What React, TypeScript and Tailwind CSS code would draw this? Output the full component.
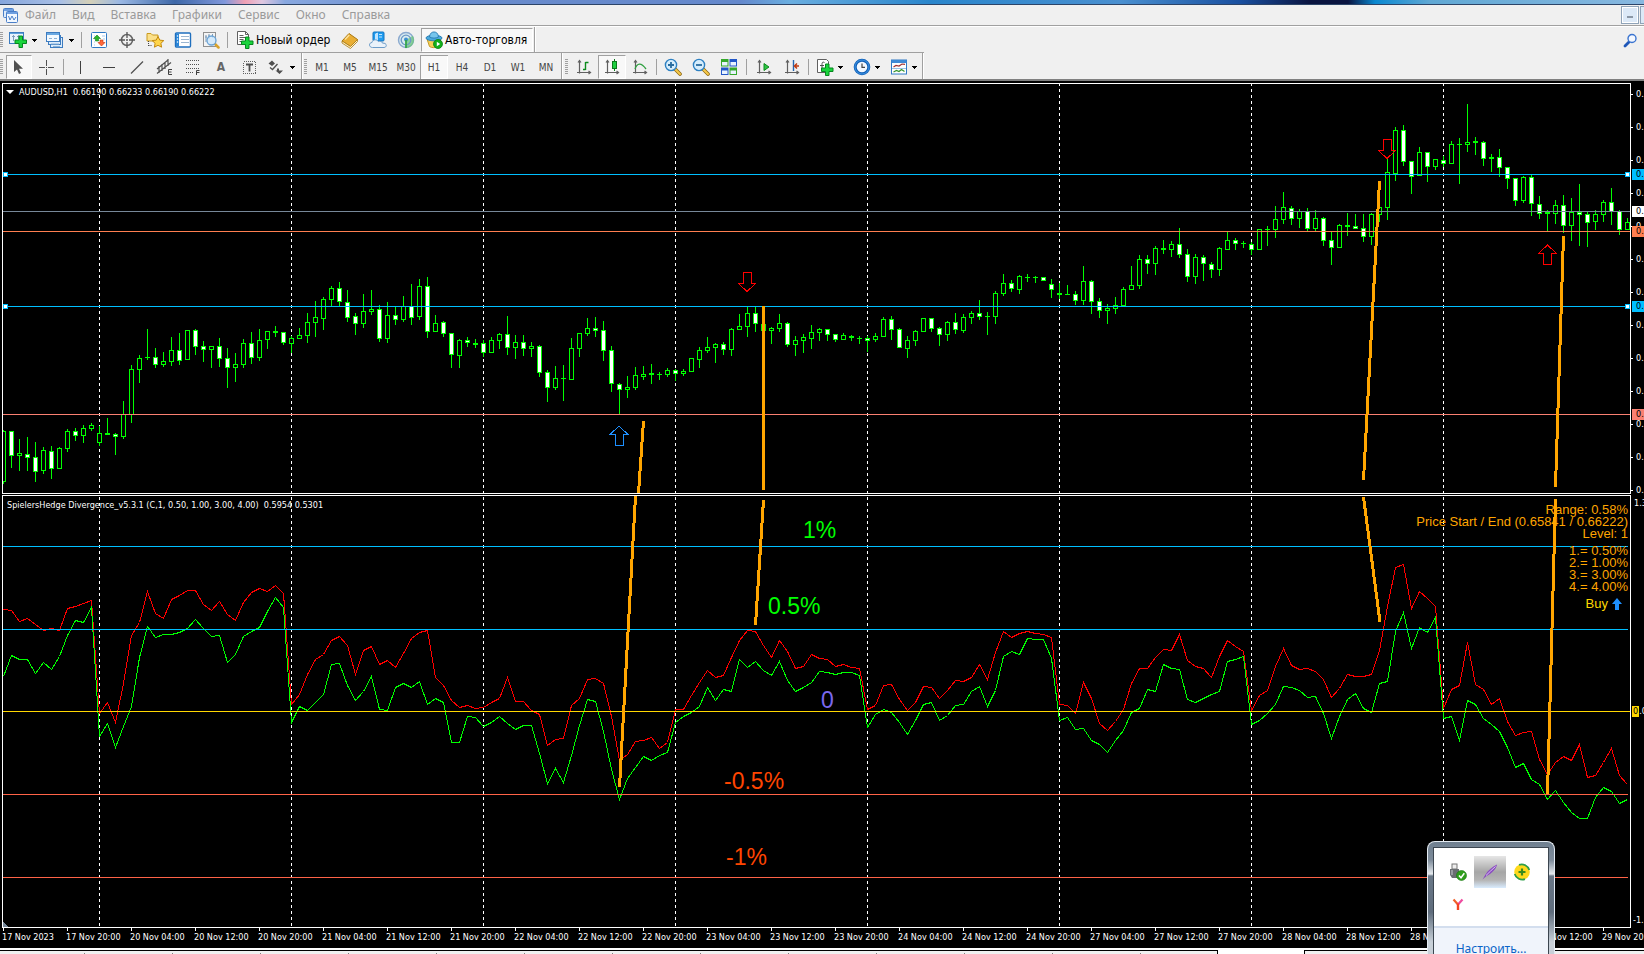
import type { ReactNode } from "react";

/* high, body top, body bottom, low, direction (u = hollow, d = filled) */
const CANDLES = `
430 431 481 483 u|431 431 455 467 d|439 453 455 470 u|437 454 457 470 d|442 457 471 481 d|447 450 470 473 u|446 451 468 478 d|447 448 468 468 u|429 431 448 451 u|428 431 435 440 d|
425 428 435 442 u|423 425 428 430 u|426 433 442 445 u|418 433 434 434 d|433 434 436 454 d|401 414 436 438 u|365 369 414 422 u|355 358 369 382 u|329 357 357 359 d|348 357 364 367 d|
352 361 364 366 u|337 350 361 365 u|333 350 360 364 d|330 330 359 359 u|329 330 346 354 d|341 346 349 361 d|346 346 349 367 u|338 346 358 366 d|348 358 367 387 d|353 364 367 381 u|
339 343 364 367 u|332 343 357 363 d|329 340 357 360 u|331 331 339 348 u|326 331 332 336 d|332 332 342 344 d|336 338 343 352 u|328 335 338 338 u|313 322 335 342 u|301 317 322 336 u|
297 299 318 329 u|286 288 299 306 u|282 288 301 305 d|290 302 317 321 d|313 316 323 334 d|294 311 323 327 u|290 309 311 314 u|305 309 338 341 d|302 315 338 342 u|306 315 319 324 d|
296 306 319 321 u|284 306 317 324 d|279 286 316 319 u|277 286 331 337 d|315 323 331 331 u|321 322 333 336 d|333 333 354 367 d|339 340 355 367 u|337 340 342 346 d|339 343 344 347 d|
340 343 352 356 d|337 340 352 352 u|333 334 340 348 u|316 334 347 354 d|335 342 347 358 u|335 342 348 355 d|342 346 348 356 u|345 346 372 376 d|370 372 387 401 d|366 378 387 389 u|
365 378 378 400 d|338 348 379 379 u|333 333 348 356 u|318 328 333 335 u|317 328 330 336 d|321 330 350 360 d|346 350 383 391 d|383 384 389 413 d|376 387 389 397 u|367 375 387 389 u|
366 374 376 379 u|364 373 374 383 d|372 374 374 379 d|368 370 374 376 u|369 370 373 380 d|369 371 373 375 u|358 358 371 371 u|347 350 359 367 u|337 347 350 352 u|343 344 347 362 u|
342 344 349 354 d|328 329 349 355 u|314 326 329 329 u|307 313 326 336 u|307 313 323 331 d|307 324 330 330 u|327 328 330 343 u|314 323 328 331 u|322 323 344 346 d|336 340 344 355 u|
334 337 340 352 u|325 332 338 348 u|328 329 332 340 u|329 329 334 340 d|334 334 339 341 d|333 335 339 339 u|335 336 337 340 d|336 338 338 343 d|336 338 340 351 d|333 336 339 341 u|
317 319 336 336 u|316 319 329 339 d|328 329 347 347 d|336 340 348 357 u|330 331 340 345 u|318 318 331 331 u|318 318 328 331 d|327 328 334 345 d|321 322 334 340 u|313 322 329 333 d|
314 317 330 332 u|311 313 317 323 u|300 313 316 319 d|312 316 316 334 d|291 293 316 323 u|274 283 293 295 u|280 283 288 291 d|275 276 289 293 u|274 277 277 281 d|276 277 277 282 d|
277 277 280 280 d|279 284 289 297 d|283 293 294 298 d|285 294 294 294 d|291 294 300 304 d|266 281 300 304 u|280 281 301 313 d|298 301 310 317 d|304 308 310 323 u|297 305 308 313 u|
287 289 305 305 u|266 285 289 289 u|255 259 285 288 u|255 259 263 273 d|246 248 263 274 u|240 248 249 253 d|241 244 249 256 u|228 244 254 257 d|249 254 276 281 d|254 257 276 283 u|
255 257 263 280 d|262 264 269 277 d|247 248 269 275 u|232 240 249 249 u|238 240 243 249 d|241 243 243 247 d|242 244 249 254 d|229 229 249 249 u|226 229 229 245 d|206 219 229 237 u|
192 207 219 223 u|206 208 218 224 d|209 211 218 227 u|208 211 228 231 d|210 218 228 231 u|217 218 240 245 d|232 240 247 264 d|224 225 247 247 u|213 225 226 235 d|214 226 228 228 d|
214 228 236 241 d|213 214 236 244 u|207 207 214 221 u|158 172 207 219 u|127 130 173 180 u|125 130 161 165 d|161 161 176 193 d|147 152 175 175 u|152 152 166 181 d|159 159 166 169 u|
156 160 163 166 d|141 144 163 163 u|138 144 144 183 d|104 142 144 151 u|137 141 142 154 d|141 142 158 165 d|154 157 158 171 d|149 157 167 176 d|167 167 178 188 d|178 178 200 205 d|
176 177 200 202 u|175 177 203 215 d|196 204 213 218 d|210 212 213 230 d|200 205 213 223 u|195 205 225 232 d|198 212 225 240 u|184 212 214 245 d|211 214 222 246 d|210 214 221 229 u|
200 202 214 221 u|188 202 211 224 d|210 211 229 234 d|218 222 229 229 u`
  .trim()
  .split("|")
  .map((row) => {
    const [h, t, b, l, dir] = row.trim().split(" ");
    return { h: +h, t: +t, b: +b, l: +l, up: dir === "u" };
  });

/* samples in thirds of a pixel, measured from y = 490 */
const RED = [
  358, 362, 395, 386, 403, 420, 416, 421, 354, 349, 341, 332, 670, 638, 697, 580, 437, 398, 303, 371, 385, 328, 315, 302, 302, 343, 361, 335, 374, 390, 338, 308, 295, 304, 287,
  310, 642, 612, 553, 508, 492, 450, 438, 467, 553, 482, 470, 522, 511, 532, 490, 444, 428, 420, 562, 586, 632, 652, 647, 656, 651, 638, 626, 563, 634, 634, 661, 672, 766, 748,
  744, 645, 626, 569, 565, 580, 680, 812, 792, 755, 751, 742, 775, 758, 659, 658, 617, 577, 541, 562, 556, 503, 452, 421, 425, 467, 502, 452, 484, 535, 529, 493, 504, 509, 529,
  523, 532, 536, 657, 646, 586, 583, 628, 661, 637, 589, 592, 625, 600, 571, 574, 562, 523, 568, 487, 425, 443, 431, 424, 430, 433, 443, 643, 646, 669, 577, 626, 700, 721, 694,
  658, 580, 535, 535, 502, 478, 481, 434, 512, 530, 536, 562, 500, 450, 470, 484, 662, 616, 602, 530, 476, 526, 539, 535, 544, 568, 622, 595, 553, 559, 559, 553, 480, 350, 233,
  224, 355, 305, 325, 349, 655, 598, 585, 458, 584, 598, 643, 626, 695, 737, 728, 724, 808, 853, 817, 800, 810, 762, 861, 856, 817, 775, 856, 884,
];
const GREEN = [
  560, 496, 508, 508, 550, 518, 538, 500, 435, 392, 397, 352, 740, 700, 772, 709, 650, 503, 408, 442, 434, 433, 427, 415, 388, 415, 439, 437, 516, 494, 440, 425, 411, 364, 322,
  352, 697, 650, 661, 637, 612, 524, 520, 586, 632, 604, 558, 657, 662, 592, 580, 592, 575, 643, 626, 638, 758, 758, 679, 682, 710, 697, 679, 701, 718, 706, 706, 790, 881, 835,
  877, 796, 706, 628, 634, 724, 838, 928, 865, 833, 799, 811, 797, 786, 697, 678, 667, 650, 593, 631, 598, 604, 509, 532, 514, 541, 556, 515, 571, 604, 592, 577, 544, 547, 553,
  547, 547, 557, 712, 674, 658, 667, 698, 733, 691, 643, 637, 690, 676, 647, 643, 605, 590, 649, 600, 499, 485, 493, 445, 448, 448, 505, 692, 682, 718, 715, 750, 763, 787, 752,
  722, 667, 655, 598, 604, 523, 535, 539, 628, 638, 625, 613, 603, 514, 508, 499, 702, 691, 670, 643, 589, 592, 601, 622, 619, 670, 745, 679, 629, 611, 655, 667, 580, 574, 425,
  367, 475, 413, 427, 382, 686, 680, 750, 631, 643, 685, 703, 724, 773, 832, 820, 868, 883, 928, 902, 937, 967, 985, 985, 922, 892, 905, 940, 928,
];
const toPoints = (v: number[]) => v.map((y, i) => `${3 + i * 8},${490 + Math.floor(y / 3)}`).join(" ");

const DAYS = [99, 291, 483, 675, 867, 1059, 1251, 1443];
const TIMES = [
  "17 Nov 2023",
  "17 Nov 20:00",
  ...[20, 21, 22, 23, 24, 27, 28, 29].flatMap((d) => [`${d} Nov 04:00`, `${d} Nov 12:00`, `${d} Nov 20:00`]),
];

function HLine({ y, color, from = 3, to = 1628 }: { y: number; color: string; from?: number; to?: number }) {
  return <rect x={from} y={y} width={to - from} height={1} fill={color} />;
}

function DayLines({ from, to }: { from: number; to: number }) {
  return (
    <>
      {DAYS.map((x) => (
        <line key={x} x1={x + 0.5} x2={x + 0.5} y1={from} y2={to} stroke="#fff" strokeDasharray="3 3" />
      ))}
    </>
  );
}

function Handle({ x, y }: { x: number; y: number }) {
  return (
    <g>
      <rect x={x} y={y} width={5} height={5} fill="#00bfff" />
      <rect x={x + 1} y={y + 1} width={3} height={3} fill="#fff" />
    </g>
  );
}

function BigArrow({ x, y, down, color }: { x: number; y: number; down?: boolean; color: string }) {
  const d = down
    ? `M${x - 4} ${y}H${x + 4}V${y + 11}H${x + 8.5}L${x} ${y + 19}L${x - 8.5} ${y + 11}H${x - 4}Z`
    : `M${x - 4} ${y + 19}H${x + 4}V${y + 8}H${x + 8.5}L${x} ${y}L${x - 8.5} ${y + 8}H${x - 4}Z`;
  return <path d={d} fill="none" stroke={color} />;
}

function PriceChart() {
  return (
    <svg className="block h-full w-full" viewBox="3 84 1627 409" preserveAspectRatio="none" shapeRendering="crispEdges" role="img" aria-label="AUDUSD price">
      <DayLines from={83} to={493} />
      {CANDLES.map((c, i) => {
        const x = 3 + i * 8;
        const h = c.b - c.t + 1;
        return (
          <g key={i}>
            <rect x={x} y={c.h} width={1} height={c.l - c.h + 1} fill="#0f0" />
            <rect x={x - 2} y={c.t} width={5} height={h} fill="#0f0" />
            {h > 2 && <rect x={x - 1} y={c.t + 1} width={3} height={h - 2} fill={c.up ? "#000" : "#fff"} />}
          </g>
        );
      })}
      <HLine y={174} color="#00bfff" />
      <HLine y={306} color="#00bfff" />
      <HLine y={211} color="#778899" to={1630} />
      <HLine y={231} color="#ff7f50" to={1630} />
      <HLine y={414} color="#fa8072" to={1630} />
      <Handle x={3} y={172} />
      <Handle x={3} y={304} />
      <Handle x={1625} y={172} />
      <Handle x={1625} y={304} />
      <g stroke="#ffa500" strokeWidth={3}>
        <path d="M643.5 421L638.5 493M763.5 306V490M1379.5 181L1363.5 480M1563.5 236L1555.5 487" />
      </g>
      <BigArrow x={747} y={272.5} down color="#f00" />
      <BigArrow x={1387} y={139.5} down color="#f00" />
      <BigArrow x={1547.5} y={245} color="#f00" />
      <BigArrow x={619} y={426} color="#1e90ff" />
    </svg>
  );
}

function DivergenceChart() {
  return (
    <svg className="block h-full w-full" viewBox="3 496 1627 431" preserveAspectRatio="none" shapeRendering="crispEdges" role="img" aria-label="Divergence indicator">
      <DayLines from={497} to={927} />
      <polyline points={toPoints(RED)} transform="translate(.5 .5)" fill="none" stroke="#f00" />
      <polyline points={toPoints(GREEN)} transform="translate(.5 .5)" fill="none" stroke="#0f0" />
      <HLine y={546} color="#00bfff" />
      <HLine y={629} color="#00bfff" />
      <HLine y={711} color="#ffd700" to={1630} />
      <HLine y={794} color="#ff6347" />
      <HLine y={877} color="#ff6347" />
      <path d="M635.5 496L619.5 787M763.5 500L755.5 625M1363.5 497L1380 622M1555.5 499L1547.5 794" stroke="#ffa500" strokeWidth={3} />
      <path d="M3 922L8 927H3Z" fill="#778899" />
    </svg>
  );
}

/* ---------- toolbar parts ---------- */

const Grip = () => <span className="my-1 w-[3px] shrink-0 bg-[repeating-linear-gradient(#a0a0a0_0_1px,#f0f0f0_1px_2px)]" />;
const Sep = ({ className = "" }: { className?: string }) => <span className={`my-1 w-px shrink-0 bg-[#a0a0a0] ${className}`} />;
const EndSep = ({ className = "" }: { className?: string }) => <span className={`w-0.5 shrink-0 border-r border-white bg-[#a0a0a0] ${className}`} />;

const PRESSED = "border border-r-white border-b-white border-l-[#a0a0a0] border-t-[#a0a0a0] bg-[#f8f8f8]";

function Tool({ label, children, className = "w-7", pressed }: { label: string; children: ReactNode; className?: string; pressed?: boolean }) {
  return (
    <button type="button" aria-label={label} aria-pressed={pressed} className={`flex shrink-0 items-center justify-center ${className} ${pressed ? PRESSED : ""}`}>
      {children}
    </button>
  );
}

function Caret({ label, className = "w-2.5" }: { label: string; className?: string }) {
  return (
    <Tool label={label} className={className}>
      <svg width="5" height="3" viewBox="0 0 5 3" shapeRendering="crispEdges">
        <path d="M0 0H5L2.5 3Z" fill="#000" />
      </svg>
    </Tool>
  );
}

const Icon = ({ children, size = 18 }: { children: ReactNode; size?: number }) => (
  <svg width={size} height={size} viewBox="0 0 18 18" fill="none" className="shrink-0">
    {children}
  </svg>
);

const GreenPlus = ({ x, y }: { x: number; y: number }) => (
  <path d={`M${x + 4} ${y}h3.5v4h4v3.5h-4v4h-3.5v-4h-4v-3.5h4z`} fill="#19d43c" stroke="#06861f" />
);

function NewChartIcon() {
  return (
    <Icon>
      <rect x=".5" y="1.5" width="14" height="11" fill="#e8f3fd" stroke="#3d7cc0" />
      <path d="M1 2.5h13" stroke="#5fa2de" />
      <path d="M4.5 4v6M3 5.5h3M9.5 4v4M8 5.5h3" stroke="#7d9cbb" />
      <GreenPlus x={6} y={5} />
    </Icon>
  );
}
function ProfilesIcon() {
  return (
    <Icon>
      <rect x="4.5" y="6.5" width="12" height="10" fill="#dcecfb" stroke="#3d7cc0" />
      <rect x="2.5" y="4.5" width="12" height="9" fill="#dcecfb" stroke="#3d7cc0" />
      <rect x=".5" y="1.5" width="13" height="9" fill="#f4faff" stroke="#3d7cc0" />
      <path d="M1 2.5h12M1 3.5h12" stroke="#6aa9e2" />
      <path d="M3 7.5h3M8 7.5h3M5 13h8M7 15.5h7" stroke="#8bb3d8" />
    </Icon>
  );
}
function MarketIcon() {
  return (
    <Icon>
      <rect x="1.5" y="1.5" width="15" height="15" rx="1" fill="#fff" stroke="#2f78c4" />
      <path d="M4 5h1M4 8h1M4 11h1M4 14h1M12 5h3M13 8h2" stroke="#a5c9ec" />
      <path d="M7 4L10.500 7.500H8.500V10H5.500V7.500H3.500Z" fill="#2ab52a" stroke="#14801a" strokeWidth=".6" />
      <path d="M11.500 15L8 11.500H10V9H13V11.500H15Z" fill="#ff6a3c" stroke="#c8320d" strokeWidth=".6" />
    </Icon>
  );
}
function TargetIcon() {
  return (
    <Icon>
      <circle cx="9" cy="9" r="5.500" stroke="#666" strokeWidth="1.500" />
      <path d="M9 1v6M9 11v6M1 9h6M11 9h6M8 9h2" stroke="#555" strokeWidth="1.300" />
    </Icon>
  );
}
const STAR = "M12 5.500l1.800 3.600 4 .500-2.900 2.700.700 3.900L12 14.300 8.400 16.200l.700-3.900L6.200 9.600l4-.500z";
function FavoritesIcon() {
  return (
    <Icon>
      <path d="M1 2.500h4l1.500 1.500H12v6H1z" fill="#fbe08a" stroke="#c99a1e" />
      <path d="M2.500 10v6M2.500 14.500h4" stroke="#444" strokeDasharray="1 1" />
      <path d={STAR} fill="#ffd54a" stroke="#c48a10" />
    </Icon>
  );
}
function DataWindowIcon() {
  return (
    <Icon>
      <rect x="1.500" y="2" width="15" height="14" rx="1" fill="#fff" stroke="#1f6fbe" strokeWidth="1.400" />
      <rect x="2" y="2.500" width="3" height="13" fill="#2a86d8" />
      <path d="M7 5.500h8M7 8.500h8M7 11.500h8" stroke="#9cb7d2" />
      <path d="M3.500 5h0M3.500 8h0M3.500 11h0" stroke="#fff" strokeWidth="1.500" strokeLinecap="round" />
    </Icon>
  );
}
function TesterIcon() {
  return (
    <Icon>
      <rect x="1.500" y="1.500" width="12" height="14" fill="#f4f4f4" stroke="#909090" />
      <path d="M4 4v7M7 3v5M10.500 3v4M3 6h2M6 5h2" stroke="#7a9ab8" />
      <path d="M13 13l3.500 3.500" stroke="#d9a22a" strokeWidth="2.500" strokeLinecap="round" />
      <circle cx="9.500" cy="9.500" r="4.500" fill="#cfe8fb" fillOpacity=".85" stroke="#6ba4d6" strokeWidth="1.300" />
    </Icon>
  );
}
function NewOrderIcon() {
  return (
    <Icon>
      <path d="M1.500.500h8l3 3v10h-11z" fill="#fff" stroke="#606060" />
      <path d="M9.500.500v3h3" stroke="#606060" />
      <path d="M3.500 4.500h4M3.500 6.500h6M3.500 8.500h4M3.500 10.500h3" stroke="#606060" />
      <GreenPlus x={5.5} y={6} />
    </Icon>
  );
}
function BookIcon() {
  return (
    <Icon>
      <path d="M1 10L8 2.500l8.500 6L9.500 15.500z" fill="#e9ae34" stroke="#a97810" />
      <path d="M1 10l8.500 5.500 7-7v2L9.500 17.500 1 12z" fill="#fff2c8" stroke="#a97810" strokeWidth=".8" />
      <path d="M4 8.500L8.300 4" stroke="#ffe299" strokeWidth="1.500" />
    </Icon>
  );
}
function CloudPcIcon() {
  return (
    <Icon>
      <rect x="4" y="1" width="11" height="9" rx="1" fill="#1e9cf0" stroke="#1274c0" />
      <path d="M6.500 3l2-1v7h-2zM10 3.500h3M10 6h3" fill="#bfe4ff" stroke="#bfe4ff" />
      <path
        d="M3.500 16.500C1.500 16.500.500 15.200.500 13.900.500 12.500 1.600 11.500 3 11.500 3.300 9.800 4.700 8.800 6.300 8.800 7.700 8.800 8.800 9.500 9.400 10.600 11.200 9.700 13.300 10.600 13.600 12.200 15.600 11.800 17.300 12.900 17.300 14.400 17.300 15.600 16.300 16.500 15 16.500Z"
        fill="#eaf2fa"
        stroke="#6d9cc8"
      />
    </Icon>
  );
}
function SignalIcon() {
  return (
    <Icon>
      <circle cx="9" cy="9" r="7.500" fill="#d9ebf0" stroke="#8aa9cf" strokeWidth="1.400" />
      <path d="M9 9v8a8 8 0 006.800-12.200z" fill="#6cc57c" fillOpacity=".75" />
      <circle cx="9" cy="9" r="4.800" stroke="#6c98c6" strokeWidth="1.300" />
      <circle cx="9" cy="8.500" r="2" fill="#3a8fd0" />
      <path d="M9 9v8" stroke="#35a54a" strokeWidth="1.800" />
    </Icon>
  );
}
function AutoTradeIcon() {
  return (
    <Icon>
      <path d="M2 8l2.500 7.500c2 1.500 6 1.500 8.500 0L16 8z" fill="#f6cf56" stroke="#c39a28" />
      <ellipse cx="9" cy="7" rx="8" ry="2.800" fill="#4aa9dd" stroke="#2b7fb5" />
      <path d="M4.500 6C5 2 7 1 9 1s4 1 4.500 5c-3 1.500-6 1.500-9 0z" fill="#76c5ec" stroke="#2b7fb5" />
      <circle cx="13" cy="13" r="4.500" fill="#12b01a" stroke="#0b8212" strokeWidth=".8" />
      <path d="M11.800 10.700v4.600l3.400-2.300z" fill="#fff" />
    </Icon>
  );
}
function Glass({ minus }: { minus?: boolean }) {
  return (
    <Icon>
      <path d="M11 11l5 5" stroke="#8a6410" strokeWidth="3.600" strokeLinecap="round" />
      <path d="M11 11l5 5" stroke="#f5c84a" strokeWidth="2.200" strokeLinecap="round" />
      <circle cx="7" cy="7" r="5.600" fill="#d6edfc" stroke="#2d80c2" strokeWidth="1.400" />
      <path d={minus ? "M4 7h6" : "M4 7h6M7 4v6"} stroke="#2a6d9f" strokeWidth="1.800" />
    </Icon>
  );
}
const Axes = ({ children }: { children: ReactNode }) => (
  <Icon>
    <path d="M4.500 3v12.500M3 4.500L4.500 2.500 6 4.500M2 14.500H15M13.500 13L15.500 14.500 13.500 16" stroke="#606060" strokeWidth="1.200" />
    {children}
  </Icon>
);
function TilesIcon() {
  return (
    <Icon>
      <rect x="1" y="1" width="7.500" height="7.500" fill="#35a82b" />
      <rect x="9.500" y="1" width="7.500" height="7.500" fill="#2257c8" />
      <rect x="1" y="9.500" width="7.500" height="7.500" fill="#2257c8" />
      <rect x="9.500" y="9.500" width="7.500" height="7.500" fill="#35a82b" />
      <path d="M2 4h5.500v3.500H2zM10.500 4H16v3.500h-5.500zM2 12.500h5.500V16H2zM10.500 12.500H16V16h-5.500z" fill="#e8f3ff" />
    </Icon>
  );
}
function ClockIcon() {
  return (
    <Icon>
      <circle cx="9" cy="9" r="6.800" fill="#f2f8ff" stroke="#1261b8" strokeWidth="3" />
      <circle cx="9" cy="9" r="7" stroke="#48a0ee" strokeWidth=".8" />
      <path d="M9 5.500v3.800h3" stroke="#444" strokeWidth="1.200" />
    </Icon>
  );
}
function TemplateIcon() {
  return (
    <Icon>
      <rect x="1.500" y="2" width="15" height="14" fill="#fff" stroke="#2f78c4" />
      <path d="M1.500 3.500h15" stroke="#3f8ad6" strokeWidth="3" />
      <path d="M3.500 9l2.500-1.500 3 .500 3-2 3 .300" stroke="#a23232" strokeWidth="1.200" />
      <path d="M3.500 14l3-1.500 2.500 1 2.500-2 3 2" stroke="#35952e" strokeWidth="1.200" />
      <path d="M2 10.500h14" stroke="#9cc2e6" />
    </Icon>
  );
}

const MENU = ["Файл", "Вид", "Вставка", "Графики", "Сервис", "Окно", "Справка"];
const FRAMES = ["M1", "M5", "M15", "M30", "H1", "H4", "D1", "W1", "MN"];

function MenuBar() {
  return (
    <nav className="flex h-[21px] items-center border-b border-[#a0a0a0] pl-[3px] font-['Noto_Sans','Open_Sans',sans-serif] text-[12px] leading-4 text-[#9a9a9a]">
      <svg width="15" height="15" viewBox="0 0 15 15" fill="none" className="mr-[7px] shrink-0">
        <rect x=".5" y=".5" width="10" height="9" rx="1" fill="#dcebfb" stroke="#4a7fc8" />
        <rect x="3.500" y="3.500" width="11" height="11" rx="1" fill="#f2f8ff" stroke="#4a7fc8" />
        <path d="M4 5h10M1 2h9" stroke="#6f9fe0" strokeWidth="2" />
        <path d="M5.500 8l1.500 4 2-4 2 4 2-3" stroke="#4a7fc8" />
      </svg>
      <div className="flex gap-4">
        {MENU.map((m) => (
          <button key={m} type="button">
            {m}
          </button>
        ))}
      </div>
      <div className="ml-auto flex h-full w-[23px] items-center gap-px overflow-hidden">
        <button type="button" aria-label="Свернуть" className="flex h-[18px] w-[18px] shrink-0 items-end justify-center border border-[#8fa3b8] bg-[#dce9f7] pb-[5px] shadow-[inset_0_0_0_1px_#fff]">
          <span className="h-0.5 w-1.5 bg-[#8a97a6]" />
        </button>
        <button type="button" aria-label="Развернуть" className="h-[18px] w-[18px] shrink-0 border border-[#8fa3b8] bg-[#dce9f7]" />
      </div>
    </nav>
  );
}

function StandardToolbar() {
  return (
    <div className="flex h-[26px] items-stretch border-t border-white pt-px font-['DejaVu_Sans_Condensed','DejaVu_Sans',sans-serif] text-[12px] text-black">
      <Grip />
      <Tool label="Новый график" className="ml-[4px] w-[22px]"><NewChartIcon /></Tool>
      <Caret label="Список графиков" />
      <Tool label="Профили" className="ml-[5px] w-[22px]"><ProfilesIcon /></Tool>
      <Caret label="Список профилей" />
      <Sep className="ml-[5px] mr-[3px]" />
      <Tool label="Обзор рынка"><MarketIcon /></Tool>
      <Tool label="Окно данных"><TargetIcon /></Tool>
      <Tool label="Навигатор"><FavoritesIcon /></Tool>
      <Tool label="Терминал"><DataWindowIcon /></Tool>
      <Tool label="Тестер стратегий"><TesterIcon /></Tool>
      <Sep className="mx-[2px]" />
      <button type="button" className="flex w-[106px] shrink-0 items-center gap-0.5 whitespace-nowrap pl-1.5">
        <NewOrderIcon />
        Новый ордер
      </button>
      <Tool label="MetaEditor"><BookIcon /></Tool>
      <Tool label="Хостинг"><CloudPcIcon /></Tool>
      <Tool label="Сигналы"><SignalIcon /></Tool>
      <button type="button" aria-pressed="true" className={`ml-px flex w-[112px] shrink-0 items-center gap-0.5 whitespace-nowrap pl-[3px] ${PRESSED}`}>
        <AutoTradeIcon />
        Авто-торговля
      </button>
      <EndSep className="-mt-px ml-px" />
      <button type="button" aria-label="Поиск" className="ml-auto mr-[6px] flex items-center">
        <svg width="15" height="15" viewBox="0 0 15 15" fill="none">
          <path d="M2 13l4-4" stroke="#1f57b8" strokeWidth="2.800" strokeLinecap="round" />
          <circle cx="9" cy="5.500" r="4" fill="#f4f8ff" stroke="#3a74d0" strokeWidth="1.400" />
        </svg>
      </button>
    </div>
  );
}

function ChartToolbar() {
  return (
    <div className="flex h-[29px] items-stretch border-b-2 border-[#808080] font-['DejaVu_Sans_Condensed','DejaVu_Sans',sans-serif] text-[10px] text-[#444]">
      <div className="flex items-stretch border-t border-[#a0a0a0] pt-0.5">
        <Grip />
        <Tool label="Курсор" pressed className="ml-[3px] w-[26px]">
          <Icon><path d="M4 2v12l3-2.500 2 4.500 2-1-2-4.300h4z" fill="#505050" /></Icon>
        </Tool>
        <Tool label="Перекрестие">
          <Icon><path d="M9.500 2v6M9.500 11v6M2 9.500h6M11 9.500h6M9 9.500h1" stroke="#505050" shapeRendering="crispEdges" /></Icon>
        </Tool>
        <Sep className="mx-[3px]" />
        <Tool label="Вертикальная линия"><Icon><path d="M8.500 3v13" stroke="#404040" shapeRendering="crispEdges" /></Icon></Tool>
        <Tool label="Горизонтальная линия"><Icon><path d="M3 9.500h12" stroke="#404040" shapeRendering="crispEdges" /></Icon></Tool>
        <Tool label="Трендовая линия"><Icon><path d="M3 15.500L15 3.500" stroke="#505050" strokeWidth="1.200" /></Icon></Tool>
        <Tool label="Канал">
          <Icon>
            <path d="M1 11L12 2M1 15.500L15 4.500M3 8v7M6 6v7M9 4v7M12 1v7" stroke="#505050" strokeWidth="1.200" />
            <path d="M16 11.500h-3.500v5H16M12.500 14H15.500" stroke="#404040" />
          </Icon>
        </Tool>
        <Tool label="Фибоначчи">
          <Icon>
            <path d="M2 2.500h14M2 6.500h14M2 10.500h14M2 14.500h8" stroke="#505050" strokeDasharray="1 1" shapeRendering="crispEdges" />
            <path d="M15.500 12.500h-3V17M12.500 14.500h3" stroke="#404040" />
          </Icon>
        </Tool>
        <Tool label="Текст"><span className="text-[12px] font-bold leading-4 text-[#666]">A</span></Tool>
        <Tool label="Метка">
          <Icon>
            <rect x="3.500" y="3.500" width="12" height="12" stroke="#606060" strokeDasharray="1 1" shapeRendering="crispEdges" />
            <path d="M6 6.500h7M9.500 6v7.500" stroke="#505050" strokeWidth="1.800" />
          </Icon>
        </Tool>
        <Tool label="Стрелки" className="w-6">
          <Icon>
            <path d="M2.500 5.500L6 2.500l3 3-3 2.500zM9.500 12.500h1.500v-2h2v2H17l-3.500 3.500z" fill="#505050" />
            <path d="M4 9.500l2.500 2 5-5.500" stroke="#505050" strokeWidth="1.300" />
          </Icon>
        </Tool>
        <Caret label="Список стрелок" />
        <EndSep className="-mt-0.5 ml-1 mr-px" />
        <Grip />
        <div className="ml-px flex items-stretch">
          {FRAMES.map((f) => (
            <button key={f} type="button" aria-pressed={f === "H1"} className={`w-7 shrink-0 pt-px leading-4 ${f === "H1" ? "bg-[#f8f8f8] shadow-[inset_1px_1px_0_#a0a0a0,inset_-1px_-1px_0_#fff]" : ""}`}>
              {f}
            </button>
          ))}
        </div>
        <EndSep className="-mt-0.5 ml-px mr-0.5" />
        <Grip />
        <Tool label="Бары" className="ml-0.5 w-7"><Axes><path d="M10.500 4v8M10.500 4.500h3M8 11.500h2.500" stroke="#0c8a1c" strokeWidth="1.400" /></Axes></Tool>
        <Tool label="Свечи" pressed><Axes><path d="M11.500 1v12" stroke="#0c7a1c" /><rect x="9.500" y="3.500" width="4" height="7" fill="#1fd040" stroke="#0c7a1c" /></Axes></Tool>
        <Tool label="Линия"><Axes><path d="M4 11c2-6 6-7 11 0" stroke="#2fa040" strokeWidth="1.300" /></Axes></Tool>
        <Sep className="mx-0.5" />
        <Tool label="Увеличить"><Glass /></Tool>
        <Tool label="Уменьшить"><Glass minus /></Tool>
        <Tool label="Плитка"><TilesIcon /></Tool>
        <Sep className="mx-[3px]" />
        <Tool label="Автопрокрутка"><Axes><path d="M9 5.500v7l5-3.500z" fill="#2bc443" stroke="#0c8a1c" /></Axes></Tool>
        <Tool label="Сдвиг графика"><Axes><path d="M10.500 2v11" stroke="#2565b0" strokeWidth="1.400" /><path d="M16 8h-4M14 5.500L11.500 8l2.500 2.500" stroke="#c03a10" strokeWidth="1.500" /></Axes></Tool>
        <Sep className="ml-0.5 mr-[6px]" />
        <Tool label="Индикаторы" className="w-5">
          <Icon>
            <path d="M1.500 1.500h9l2 2v11h-11z" fill="#fff" stroke="#606060" />
            <path d="M8.500 4.500c-2-1-2.500 0-2.500 2v5M4 7.500h4" stroke="#505050" />
            <GreenPlus x={5.5} y={6} />
          </Icon>
        </Tool>
        <Caret label="Список индикаторов" />
        <Tool label="Периоды" className="ml-1.5 w-[22px]"><ClockIcon /></Tool>
        <Caret label="Список периодов" className="w-2" />
        <Tool label="Шаблоны" className="ml-[7px] w-[22px]"><TemplateIcon /></Tool>
        <Caret label="Список шаблонов" className="w-2" />
        <EndSep className="-mt-0.5 ml-1" />
      </div>
    </div>
  );
}

/* ---------- price scales ---------- */

const TAGS = [
  { y: 174, cls: "bg-[#00bfff] text-black" },
  { y: 211, cls: "bg-white text-black" },
  { y: 231, cls: "bg-[#ff7f50] text-black" },
  { y: 306, cls: "bg-[#00bfff] text-black" },
  { y: 414, cls: "bg-[#fa8072] text-black" },
];
const PRICE_TICKS = Array.from({ length: 13 }, (_, i) => 94 + i * 33);

function PriceScale() {
  return (
    <div className="relative w-[13px] shrink-0 text-white">
      {PRICE_TICKS.map((y) => (
        <div key={y} className="absolute left-0 flex h-3 items-center gap-[3px] leading-3" style={{ top: y - 83 - 6 }}>
          <span className="h-px w-0.5 bg-white" />
          0.
        </div>
      ))}
      {TAGS.map((t) => (
        <div key={t.y} className={`absolute left-px right-0 h-[11px] pl-1 leading-[11px] ${t.cls}`} style={{ top: t.y - 83 - 5 }}>
          0.
        </div>
      ))}
    </div>
  );
}

const LEVELS = [
  { x: 803, y: 530, text: "1%", cls: "text-[#00ff00]" },
  { x: 768, y: 606, text: "0.5%", cls: "text-[#00ff00]" },
  { x: 821, y: 700, text: "0", cls: "text-[#7b68ee]" },
  { x: 724, y: 781, text: "-0.5%", cls: "text-[#ff4500]" },
  { x: 726, y: 857, text: "-1%", cls: "text-[#ff4500]" },
];

function TrayPopup() {
  return (
    <aside className="absolute right-[89px] bottom-0 h-[113px] w-[128px] overflow-hidden rounded-t-lg border border-b-0 border-[#e4ebf2] bg-[linear-gradient(#708090_0,#7d8b9a_18px,#e6eaee_32px,#6a7888_34px,#5f6d7d_70px,#c8d0d8_100px)] px-[5px] pt-[5px]">
      <div className="flex h-full flex-col border border-b-0 border-[#3c4650] bg-white">
        <div className="grid flex-1 grid-cols-3 content-start pl-2 pr-[10px] pt-[8px]">
          <button type="button" aria-label="Безопасное извлечение" className="flex h-8 items-center justify-center">
            <svg width="18" height="18" viewBox="0 0 18 18" fill="none">
              <rect x="3" y="1" width="5" height="5" fill="#eee" stroke="#777" />
              <path d="M1 6h9v6l-2 3H3l-2-3z" fill="#6a6e72" />
              <path d="M3 7v5" stroke="#a8acb0" strokeWidth="1.500" />
              <circle cx="12.500" cy="12.500" r="5" fill="#2f9e1c" stroke="#1a7a10" strokeWidth=".6" />
              <path d="M10 12.500l2 2.200 3.300-4.500" stroke="#fff" strokeWidth="1.500" />
            </svg>
          </button>
          <button type="button" aria-label="Редактор" className="flex h-8 items-center justify-center bg-[linear-gradient(#e6e6e6,#a6a6a6_50%,#b4b4b4_75%,#d9ecff)]">
            <svg width="16" height="16" viewBox="0 0 16 16" fill="none">
              <path d="M.500 15.500L3.500 10.500C6 6.500 10 3 15 .500 14.500 4.500 10 9.500 4.500 12z" fill="#8a4bc2" />
              <path d="M4 11.500C7 8.500 10 5.500 13.500 2.500" stroke="#d9c2f0" />
            </svg>
          </button>
          <button type="button" aria-label="Обновление" className="flex h-8 items-center justify-center">
            <svg width="18" height="18" viewBox="0 0 18 18" fill="none">
              <circle cx="9" cy="9" r="7.800" fill="#ffd91c" />
              <path d="M6 1.800A8 8 0 0116.300 7M12 16.200A8 8 0 011.700 11" stroke="#2f9e4a" strokeWidth="1.800" />
              <path d="M9 5.500v7M5.500 9h7" stroke="#3a8a1c" strokeWidth="2.200" />
            </svg>
          </button>
          <button type="button" aria-label="Яндекс" className="flex h-8 items-center justify-center">
            <svg width="16" height="16" viewBox="0 0 16 16" fill="none">
              <path d="M3.500 3.500l4.500 5" stroke="#f0602a" strokeWidth="2.200" />
              <path d="M12.500 3.500L8 8.500" stroke="#ee4ba0" strokeWidth="2.200" />
              <path d="M8 7.500v6.500" stroke="#f4431f" strokeWidth="2.400" />
            </svg>
          </button>
        </div>
        <a href="#settings" className="block h-7 shrink-0 border-t-2 border-[#d3deee] bg-[#f0f4fb] pt-[12px] text-center font-['Noto_Sans','Open_Sans',sans-serif] text-[12px] leading-[18px] text-[#0a64c8]">
          Настроить...
        </a>
      </div>
    </aside>
  );
}

export default function App() {
  return (
    <div className="relative flex h-screen flex-col overflow-hidden bg-[#f0f0f0]">
      <div className="h-[5px] shrink-0 border-b border-[#2c4468] bg-[linear-gradient(90deg,#86a6dc_0,#a8bfe6_60px,#d4d0b8_90px,#9ab8e4_120px,#3e68a8_175px,#8098dc_225px,#f0a0b4_245px,#e0c8e0_262px,#88a8e0_285px,#6a8ccc_420px,#6488cc_740px,#6aaee0_790px,#2a86cc_930px,#4a90d0_1120px,#1a50a0_1240px,#0a1440_1310px,#0a1440_1348px,#0a88d0_1375px,#60a8d4_1430px,#88b8e0_1644px)]" />
      <header className="shrink-0">
        <MenuBar />
        <StandardToolbar />
        <ChartToolbar />
      </header>

      <main className="flex min-h-0 flex-1 flex-col bg-black pt-[2px] font-['DejaVu_Sans_Condensed','DejaVu_Sans',sans-serif] text-[9px] leading-3 text-white">
        <section className="flex min-h-0 flex-[411_1_0%] pl-0.5">
          <div className="relative min-w-0 flex-1 border border-white">
            <PriceChart />
            <div className="absolute left-[3px] top-0.5 flex items-center gap-[5px] whitespace-pre">
              <svg width="8" height="4" viewBox="0 0 8 4"><path d="M0 0H8L4 4Z" fill="#fff" /></svg>
              {"AUDUSD,H1  0.66190 0.66233 0.66190 0.66222"}
            </div>
          </div>
          <PriceScale />
        </section>

        <section className="mt-px flex min-h-0 flex-[433_1_0%] pl-0.5">
          <div className="relative min-w-0 flex-1 border border-white">
            <DivergenceChart />
            <div className="absolute left-1 top-[3px] whitespace-pre">{"SpielersHedge Divergence_v5.3.1 (C,1, 0.50, 1.00, 3.00, 4.00)  0.5954 0.5301"}</div>
            {LEVELS.map((l) => (
              <div key={l.text} className={`absolute font-['Liberation_Sans',Arial,sans-serif] text-[23px] leading-6 ${l.cls}`} style={{ left: l.x - 3, top: l.y - 496 - 12 }}>
                {l.text}
              </div>
            ))}
            <div className="absolute right-[2px] top-2 text-right font-['Liberation_Sans',Arial,sans-serif] text-[13px] leading-3 text-[#ffa500]">
              <p>Range: 0.58%</p>
              <p>Price Start / End (0.65841 / 0.66222)</p>
              <p className="mb-[5px]">Level: 1</p>
              <p>1.= 0.50%</p>
              <p>2.= 1.00%</p>
              <p>3.= 3.00%</p>
              <p>4.= 4.00%</p>
              <p className="mt-[5px] flex items-center justify-end gap-1 pr-[6px] text-[#ffd700]">
                Buy
                <svg width="10" height="12" viewBox="0 0 10 12"><path d="M5 0L10 6H7V12H3V6H0Z" fill="#1e90ff" /></svg>
              </p>
            </div>
          </div>
          <div className="relative w-[13px] shrink-0">
            <span className="absolute left-[3px] top-0.5">1.3</span>
            <span className="absolute left-px top-[211px] flex h-[11px] leading-[11px]">
              <span className="bg-[#ffd700] px-px text-black">0</span>.0
            </span>
            <span className="absolute bottom-0.5 left-0.5">-1.</span>
          </div>
        </section>

        <div className="flex h-5 shrink-0 overflow-hidden pl-0.5">
          {TIMES.map((t) => (
            <div key={t} className="w-16 shrink-0 whitespace-nowrap">
              <span className="ml-px block h-[3px] w-px bg-white" />
              {t}
            </div>
          ))}
        </div>
      </main>
      <footer className="flex h-[6px] shrink-0 border-t-2 border-white bg-[#f0f0f0]">
        <div className="w-[74%] border-t border-black pt-0.5">
          <div className="h-px bg-[repeating-linear-gradient(90deg,transparent_0_84px,#808080_84px_85px,transparent_85px_88px)]" />
        </div>
        <div className="w-[88px] border-x border-black bg-white" />
        <div className="flex-1 border-t border-black" />
      </footer>
      <TrayPopup />
    </div>
  );
}
